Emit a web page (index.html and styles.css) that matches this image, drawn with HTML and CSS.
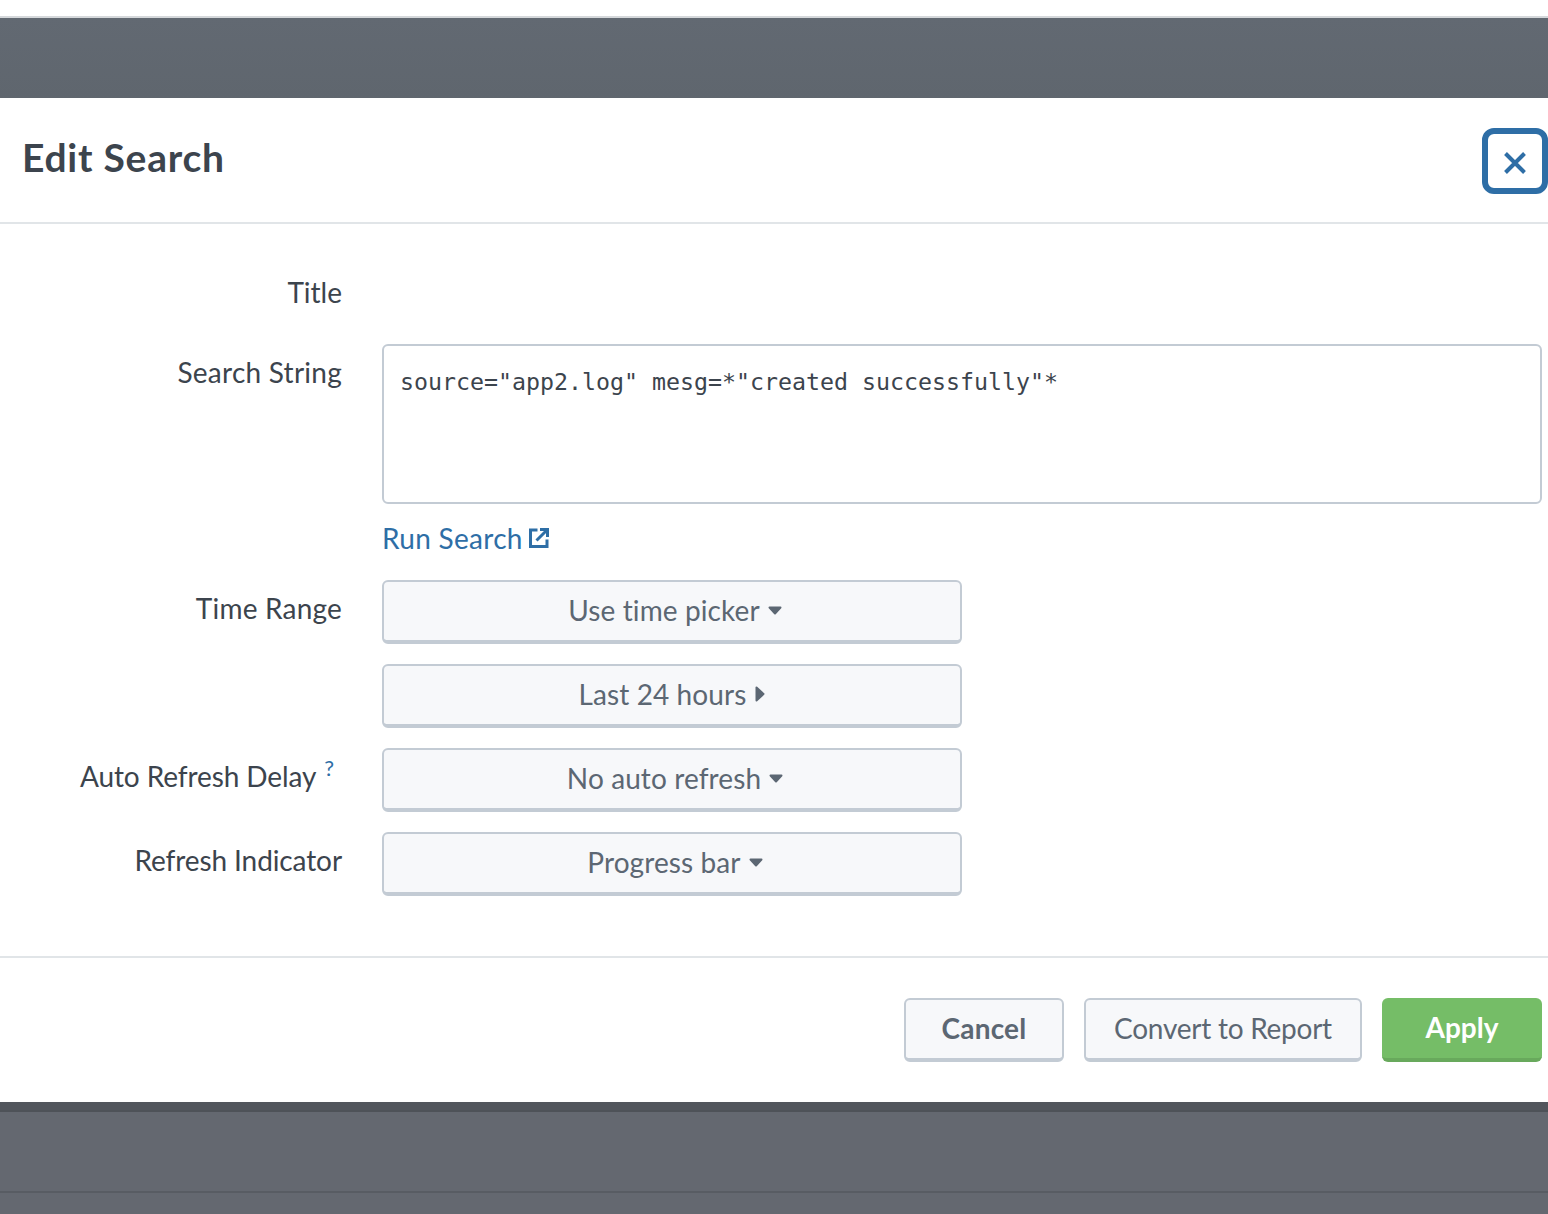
FILE: index.html
```html
<!DOCTYPE html>
<html lang="en">
<head>
<meta charset="utf-8">
<title>Edit Search</title>
<link rel="stylesheet" href="styles.css">
</head>
<body>
<div class="top-strip"></div>
<div class="backdrop-top"></div>
<main class="modal">
  <header class="modal-header">
    <h1 class="modal-title">Edit Search</h1>
    <button class="close-btn" aria-label="Close">
      <svg class="close-icon" viewBox="0 0 22 22" width="22" height="22"><path d="M1.5 1.5 20.5 20.5M20.5 1.5 1.5 20.5" /></svg>
    </button>
  </header>
  <section class="modal-body">
    <div class="row row-title">
      <div class="label">Title</div>
      <div class="control"></div>
    </div>
    <div class="row row-search">
      <div class="label">Search String</div>
      <div class="control">
        <div class="textarea">source="app2.log" mesg=*"created successfully"*</div>
        <a class="run-link">Run Search<svg class="ext-icon" viewBox="0 0 20 20" width="20" height="20"><path d="M8.5 2H1.5V18.5H18V11.5" /><path d="M7.5 12.5 17.5 2.5M11 1.5H18.5V9" /></svg></a>
      </div>
    </div>
    <div class="row">
      <div class="label label-wide">Time Range</div>
      <div class="control stack">
        <button class="select">Use time picker<svg class="caret" viewBox="0 0 14 9" width="14" height="9"><path d="M1.5 1.5H12.5L7 7.5Z" /></svg></button>
        <button class="select">Last 24 hours<svg class="caret caret-side" viewBox="0 0 10 16" width="10" height="16"><path d="M1.5 1.5V14.5L8.5 8Z" /></svg></button>
      </div>
    </div>
    <div class="row">
      <div class="label label-tight">Auto Refresh Delay<sup class="help">?</sup></div>
      <div class="control"><button class="select">No auto refresh<svg class="caret" viewBox="0 0 14 9" width="14" height="9"><path d="M1.5 1.5H12.5L7 7.5Z" /></svg></button></div>
    </div>
    <div class="row">
      <div class="label label-tight">Refresh Indicator</div>
      <div class="control"><button class="select">Progress bar<svg class="caret" viewBox="0 0 14 9" width="14" height="9"><path d="M1.5 1.5H12.5L7 7.5Z" /></svg></button></div>
    </div>
  </section>
  <footer class="modal-footer">
    <button class="btn btn-cancel">Cancel</button>
    <button class="btn btn-report">Convert to Report</button>
    <button class="btn btn-apply">Apply</button>
  </footer>
</main>
<div class="backdrop-bottom">
  <div class="backdrop-band"></div>
  <div class="backdrop-mid"></div>
</div>
</body>
</html>
```
FILE: styles.css
```css
* { box-sizing: border-box; }
html, body { margin: 0; padding: 0; }
body {
  width: 1548px;
  height: 1214px;
  overflow: hidden;
  background: #fff;
  font-family: "Lato", "Noto Sans", sans-serif;
  font-size: 28px;
  color: #3c444d;
}
.top-strip { height: 18px; background: #fff; border-bottom: 2px solid #d5d8db; }
.backdrop-top { height: 80px; background: linear-gradient(#626972, #5f666e); }
.modal { height: 1004px; background: #fff; display: flex; flex-direction: column; }
.modal-header {
  height: 126px;
  border-bottom: 2px solid #e1e5e8;
  display: flex;
  align-items: flex-start;
  justify-content: space-between;
  padding: 30px 0 0 22px;
}
.modal-title {
  margin: 0;
  font-size: 39px;
  font-weight: 700;
  letter-spacing: 0.75px;
  line-height: 58px;
  color: #3c444d;
}
.close-btn {
  width: 66px;
  height: 66px;
  margin: 0;
  padding: 3px 0 0;
  background: #fff;
  border: 6px solid #2e6ea6;
  border-radius: 12px;
  display: flex;
  align-items: center;
  justify-content: center;
}
.close-icon path { fill: none; stroke: #2e6ea6; stroke-width: 4; }
.modal-body { height: 734px; padding-top: 40px; border-bottom: 2px solid #e1e5e8; }
.row { display: grid; grid-template-columns: 342px 1160px; column-gap: 40px; margin-bottom: 20px; }
.row-title { margin-bottom: 24px; height: 56px; }
.row-search { margin-bottom: 14px; }
.label {
  text-align: right;
  line-height: 56px;
  white-space: nowrap;
}
.row-search .label { letter-spacing: 0.25px; }
.label-wide { letter-spacing: 0.2px; }
.label-tight { letter-spacing: -0.1px; }
.textarea {
  height: 160px;
  border: 2px solid #c3cbd4;
  border-radius: 6px;
  padding: 18px 16px;
  font-family: "DejaVu Sans Mono", "Liberation Mono", monospace;
  font-size: 23.25px;
  line-height: 36px;
  color: #3c444d;
}
.run-link {
  display: flex;
  align-items: center;
  height: 56px;
  margin-top: 6px;
  color: #2e6ea6;
  letter-spacing: 0.3px;
}
.ext-icon { margin-left: 6px; }
.ext-icon path { fill: none; stroke: #2e6ea6; stroke-width: 3; }
.stack { display: flex; flex-direction: column; gap: 20px; }
.select {
  display: flex;
  align-items: center;
  justify-content: center;
  width: 580px;
  height: 64px;
  padding: 0 0 2px;
  background: #f7f8fa;
  border: 2px solid #c3cbd4;
  border-bottom-width: 4px;
  border-radius: 6px;
  font: inherit;
  letter-spacing: 0.1px;
  color: #5c6773;
}
.caret { margin-left: 8px; margin-right: -6px; }
.caret-side { margin-left: 9px; margin-right: 0; }
.caret path { fill: #5c6773; stroke: #5c6773; stroke-width: 2; stroke-linejoin: round; }
.help {
  font-size: 22px;
  color: #2e6ea6;
  margin-left: 8px;
  margin-right: 8px;
  line-height: 0;
  position: relative;
  top: -1px;
  vertical-align: super;
}
.modal-footer {
  flex: 1;
  display: flex;
  justify-content: flex-end;
  gap: 20px;
  padding: 40px 6px 0 0;
}
.btn {
  height: 64px;
  padding: 0 0 2px;
  border-radius: 6px;
  font: inherit;
  background: #f7f8fa;
  border: 2px solid #c3cbd4;
  border-bottom-width: 4px;
  color: #5c6773;
}
.btn-cancel { width: 160px; font-weight: 700; letter-spacing: 0.2px; }
.btn-report { width: 278px; letter-spacing: -0.25px; }
.btn-apply {
  width: 160px;
  background: #75bd67;
  border: 0;
  border-bottom: 4px solid #68a95c;
  color: #fff;
  font-weight: 700;
}
.backdrop-bottom { height: 112px; background: #646870; }
.backdrop-band { height: 10px; background: #52565d; border-bottom: 2px solid #4e5258; }
.backdrop-mid { height: 81px; border-bottom: 2px solid #585c63; }
```
